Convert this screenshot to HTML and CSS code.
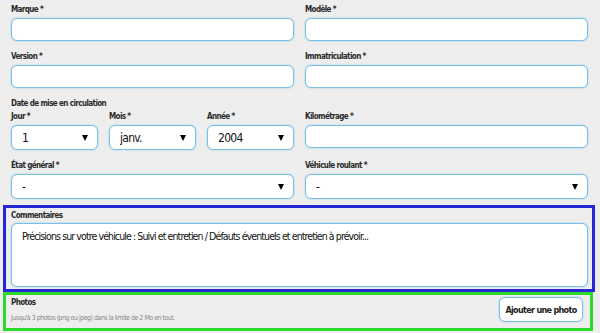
FILE: index.html
```html
<!DOCTYPE html>
<html lang="fr">
<head>
    <meta charset="UTF-8"/>
    <title>Votre véhicule</title>
    <link rel="stylesheet" href="styles.css">
</head>
<body>
<form class="vehicle-form" action="">
    <div class="row">
        <div class="field">
            <label>Marque *</label>
            <input type="text" class="text-input">
        </div>
        <div class="field">
            <label>Modèle *</label>
            <input type="text" class="text-input">
        </div>
    </div>

    <div class="row">
        <div class="field">
            <label>Version *</label>
            <input type="text" class="text-input">
        </div>
        <div class="field">
            <label>Immatriculation *</label>
            <input type="text" class="text-input">
        </div>
    </div>

    <div class="row">
        <div class="field">
            <p class="group-title">Date de mise en circulation</p>
            <div class="date">
                <div class="field">
                    <label>Jour *</label>
                    <div class="select"><select><option>1</option></select></div>
                </div>
                <div class="field">
                    <label>Mois *</label>
                    <div class="select"><select><option>janv.</option></select></div>
                </div>
                <div class="field">
                    <label>Année *</label>
                    <div class="select"><select><option>2004</option></select></div>
                </div>
            </div>
        </div>
        <div class="field field-offset">
            <label>Kilométrage *</label>
            <input type="text" class="text-input">
        </div>
    </div>

    <div class="row row-last">
        <div class="field">
            <label>État général *</label>
            <div class="select"><select><option>-</option></select></div>
        </div>
        <div class="field">
            <label>Véhicule roulant *</label>
            <div class="select"><select><option>-</option></select></div>
        </div>
    </div>

    <div class="comments">
        <label>Commentaires</label>
        <textarea placeholder="Précisions sur votre véhicule : Suivi et entretien / Défauts éventuels et entretien à prévoir..."></textarea>
    </div>

    <div class="photos">
        <div>
            <p class="photos-title">Photos</p>
            <p class="hint">Jusqu'à 3 photos (png ou jpeg) dans la limite de 2 Mo en tout.</p>
        </div>
        <button type="button" class="add-photo">Ajouter une photo</button>
    </div>
</form>
</body>
</html>
```

FILE: styles.css
```css
* {
    margin: 0;
    padding: 0;
    box-sizing: border-box;
}

body {
    background: #eeeeee;
    font-family: "Liberation Sans Narrow", "DejaVu Sans Condensed", "Liberation Sans", sans-serif;
    color: #333;
}

.vehicle-form {
    padding: 4px 12px 0 11px;
}

.row {
    display: grid;
    grid-template-columns: 1fr 1fr;
    column-gap: 11px;
    margin-bottom: 10px;
}

.row-last {
    margin-bottom: 6px;
}

.field label,
.group-title,
.comments label,
.photos-title {
    display: block;
    font-size: 8px;
    line-height: 12px;
    font-weight: 700;
    letter-spacing: -0.6px;
    color: #2a2a2a;
    margin-bottom: 2px;
}

.group-title {
    margin-bottom: 1px;
}

.field-offset {
    padding-top: 13px;
}

.text-input,
.select select,
textarea,
.add-photo {
    border: 1px solid #79c1e6;
    border-radius: 6px;
    background: #fff;
    box-shadow: 0 0 2px rgba(100, 180, 225, 0.6);
    outline: none;
    font-family: inherit;
    color: #111;
}

.text-input {
    display: block;
    width: 100%;
    height: 23px;
}

.date {
    display: grid;
    grid-template-columns: 1fr 1fr 1fr;
    column-gap: 11px;
}

.select {
    position: relative;
}

.select select {
    display: block;
    width: 100%;
    height: 25px;
    padding-left: 10px;
    font-size: 12px;
    letter-spacing: -0.7px;
    appearance: none;
    -webkit-appearance: none;
}

.select::after {
    content: "";
    position: absolute;
    right: 10px;
    top: 10px;
    border-left: 3.5px solid transparent;
    border-right: 3.5px solid transparent;
    border-top: 6px solid #000;
    pointer-events: none;
}

.comments {
    margin: 0 -7px 0 -8px;
    border: 3px solid #2727d6;
    padding: 2px 4px 2px 5px;
}

.comments label {
    margin-bottom: 1px;
}

textarea {
    display: block;
    width: 100%;
    height: 64px;
    resize: none;
    padding: 6px 10px;
    font-size: 10.5px;
    letter-spacing: -0.9px;
}

textarea::placeholder {
    color: #111;
    opacity: 1;
}

.photos {
    display: flex;
    justify-content: space-between;
    align-items: flex-start;
    margin: 0 -5px 0 -8px;
    height: 39px;
    border: 3px solid #2bd92b;
    padding: 2px 7px 0 5px;
}

.photos-title {
    margin-bottom: 0;
}

.hint {
    margin-top: 4px;
    font-size: 7px;
    line-height: 10px;
    color: #888;
    letter-spacing: -0.5px;
}

.add-photo {
    width: 84px;
    height: 25px;
    padding: 0;
    font-size: 9px;
    font-weight: 700;
    letter-spacing: -0.7px;
    white-space: nowrap;
    color: #222;
    cursor: pointer;
}
```
